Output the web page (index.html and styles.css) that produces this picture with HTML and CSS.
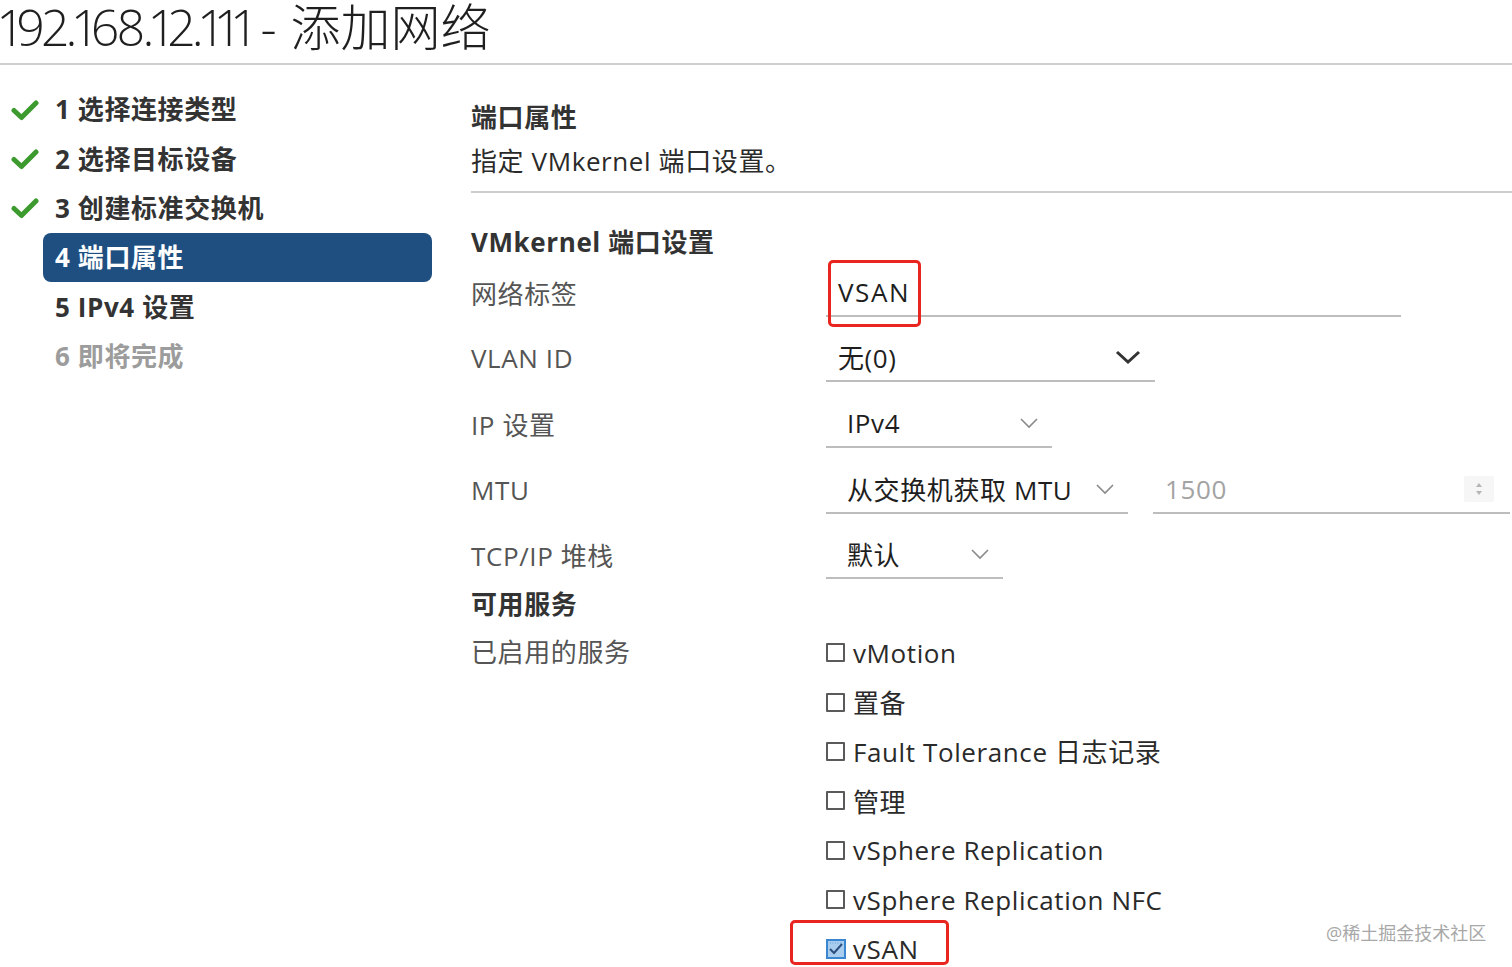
FILE: index.html
```html
<!DOCTYPE html>
<html lang="zh-CN">
<head>
  <meta charset="UTF-8">
  <meta name="viewport" content="width=device-width, initial-scale=1.0">
  <title>192.168.12.111 - 添加网络</title>
  <link rel="stylesheet" href="styles.css">
</head>
<body>
  <header class="dialog-header">
    <h1 class="dialog-title"><span class="host">192.168.12.111 -</span> 添加网络</h1>
  </header>

  <div class="wizard">
    <nav class="steps">
      <div class="step done">
        <span class="step-icon"><svg width="28" height="22" viewBox="0 0 28 22"><path d="M3 11.5 L10.5 18.5 L25 4" fill="none" stroke="#3d9a2e" stroke-width="5" stroke-linecap="round" stroke-linejoin="round"/></svg></span>
        <span class="step-label">1 选择连接类型</span>
      </div>
      <div class="step done">
        <span class="step-icon"><svg width="28" height="22" viewBox="0 0 28 22"><path d="M3 11.5 L10.5 18.5 L25 4" fill="none" stroke="#3d9a2e" stroke-width="5" stroke-linecap="round" stroke-linejoin="round"/></svg></span>
        <span class="step-label">2 选择目标设备</span>
      </div>
      <div class="step done">
        <span class="step-icon"><svg width="28" height="22" viewBox="0 0 28 22"><path d="M3 11.5 L10.5 18.5 L25 4" fill="none" stroke="#3d9a2e" stroke-width="5" stroke-linecap="round" stroke-linejoin="round"/></svg></span>
        <span class="step-label">3 创建标准交换机</span>
      </div>
      <div class="step active">
        <span class="step-icon"></span>
        <span class="step-label">4 端口属性</span>
      </div>
      <div class="step">
        <span class="step-icon"></span>
        <span class="step-label">5 IPv4 设置</span>
      </div>
      <div class="step disabled">
        <span class="step-icon"></span>
        <span class="step-label">6 即将完成</span>
      </div>
    </nav>

    <main class="page">
      <h2 class="page-title">端口属性</h2>
      <p class="page-desc">指定 VMkernel 端口设置。</p>

      <h3 class="section-title">VMkernel 端口设置</h3>
      <div class="form">
        <div class="form-row">
          <span class="form-label">网络标签</span>
          <div class="field field-label">
            <span class="field-value">VSAN</span>
            <span class="highlight highlight-input"></span>
          </div>
        </div>
        <div class="form-row">
          <span class="form-label">VLAN ID</span>
          <div class="field select select-vlan">
            <span class="field-value">无(0)</span>
            <svg class="chevron bold" width="26" height="16" viewBox="0 0 26 16"><path d="M2 3 L13 13 L24 3" fill="none" stroke="#333" stroke-width="3"/></svg>
          </div>
        </div>
        <div class="form-row">
          <span class="form-label">IP 设置</span>
          <div class="field select select-ip">
            <span class="field-value">IPv4</span>
            <svg class="chevron" width="20" height="12" viewBox="0 0 20 12"><path d="M2 2 L10 10 L18 2" fill="none" stroke="#8a8a8a" stroke-width="1.6"/></svg>
          </div>
        </div>
        <div class="form-row">
          <span class="form-label">MTU</span>
          <div class="field select select-mtu">
            <span class="field-value">从交换机获取 MTU</span>
            <svg class="chevron" width="20" height="12" viewBox="0 0 20 12"><path d="M2 2 L10 10 L18 2" fill="none" stroke="#8a8a8a" stroke-width="1.6"/></svg>
          </div>
          <div class="field field-number">
            <span class="field-value muted">1500</span>
            <span class="spinner">
              <svg width="10" height="18" viewBox="0 0 10 18"><path d="M2 7 L5 3 L8 7 Z M2 11 L5 15 L8 11 Z" fill="#b5b5b5"/></svg>
            </span>
          </div>
        </div>
        <div class="form-row">
          <span class="form-label">TCP/IP 堆栈</span>
          <div class="field select select-stack">
            <span class="field-value">默认</span>
            <svg class="chevron" width="20" height="12" viewBox="0 0 20 12"><path d="M2 2 L10 10 L18 2" fill="none" stroke="#8a8a8a" stroke-width="1.6"/></svg>
          </div>
        </div>
      </div>

      <h3 class="section-title services-title">可用服务</h3>
      <div class="services">
        <span class="form-label services-label">已启用的服务</span>
        <ul class="service-list">
          <li class="service"><span class="checkbox"></span>vMotion</li>
          <li class="service"><span class="checkbox"></span>置备</li>
          <li class="service"><span class="checkbox"></span>Fault Tolerance 日志记录</li>
          <li class="service"><span class="checkbox"></span>管理</li>
          <li class="service"><span class="checkbox"></span>vSphere Replication</li>
          <li class="service"><span class="checkbox"></span>vSphere Replication NFC</li>
          <li class="service">
            <svg class="checkbox-on" width="20" height="20" viewBox="0 0 20 20"><rect x="1" y="1" width="18" height="18" fill="#a9cdef" stroke="#3b86d0" stroke-width="2"/><path d="M4 10 L8 14 L16 5" fill="none" stroke="#2c4f80" stroke-width="2"/><path d="M4 4 H16" stroke="#6aa3dc" stroke-width="1" stroke-dasharray="1 1.5"/></svg>vSAN
            <span class="highlight highlight-check"></span>
          </li>
        </ul>
      </div>
    </main>
  </div>

  <div class="watermark">@稀土掘金技术社区</div>
</body>
</html>
```

FILE: styles.css
```css
body {
  font-family: 'Open Sans', 'Noto Sans CJK SC', sans-serif;
  margin: 0;
  width: 1512px;
  height: 967px;
  overflow: hidden;
  color: #2e2e2e;
  background-color: #fff;
  position: relative;
  letter-spacing: 0.6px;
}
.dialog-header {
  height: 63px;
  border-bottom: 2px solid #cfcfcf;
}
.dialog-title {
  margin: 0;
  padding-top: 1px;
  font-size: 50px;
  line-height: 52px;
  font-weight: 300;
  color: #1f1f1f;
  letter-spacing: 0;
  white-space: nowrap;
}
.host {
  font-variant-numeric: proportional-nums;
  letter-spacing: -3px;
  margin-right: 4px;
}
.wizard {
  display: flex;
}
.steps {
  width: 471px;
  flex-shrink: 0;
  padding-top: 20px;
}
.step {
  display: flex;
  align-items: center;
  height: 49.4px;
}
.step-icon {
  width: 43px;
  display: flex;
  justify-content: center;
  padding-left: 6px;
  box-sizing: border-box;
}
.step-label {
  width: 389px;
  height: 49px;
  line-height: 49px;
  padding-left: 12px;
  box-sizing: border-box;
  border-radius: 8px;
  font-size: 26px;
  font-weight: 700;
  color: #333;
}
.step.active .step-label {
  background-color: #1e4f80;
  color: #fff;
}
.step.disabled .step-label {
  color: #9c9c9c;
}
.page {
  flex: 1;
}
.page-title {
  margin: 30px 0 0;
  font-size: 26px;
  line-height: 44px;
  font-weight: 700;
  color: #333;
}
.page-desc {
  margin: 0;
  padding-bottom: 8px;
  font-size: 26px;
  line-height: 44px;
  color: #2a2a2a;
  border-bottom: 2px solid #cdcdcd;
}
.section-title {
  margin: 31px 0 0;
  font-size: 26px;
  line-height: 36px;
  font-weight: 700;
  color: #333;
}
.form-row {
  display: flex;
  align-items: center;
  height: 65.6px;
}
.form-label {
  width: 355px;
  flex-shrink: 0;
  font-size: 26px;
  color: #555;
}
.field {
  position: relative;
  display: flex;
  align-items: center;
  height: 46px;
  border-bottom: 2px solid #bdbdbd;
  font-size: 26px;
  color: #1e1e1e;
  box-sizing: content-box;
}
.field-value {
  flex: 1;
}
.field-value.muted {
  color: #a3a3a3;
}
.field-label {
  width: 563px;
  padding-left: 12px;
}
.field-label .field-value {
  letter-spacing: 1.6px;
}
.select {
  padding-left: 21px;
}
.select-vlan {
  width: 303px;
  padding-left: 12px;
  padding-right: 14px;
}
.select-ip {
  width: 192px;
  padding-right: 13px;
}
.select-mtu {
  width: 268px;
  padding-right: 13px;
}
.select-stack {
  width: 143px;
  padding-right: 13px;
}
.field-number {
  margin-left: 25px;
  width: 345px;
  padding-left: 12px;
}
.spinner {
  width: 30px;
  height: 26px;
  margin-right: 16px;
  background-color: #f6f6f6;
  border-radius: 2px;
  display: flex;
  align-items: center;
  justify-content: center;
}
.highlight {
  position: absolute;
  border: 3px solid #e8251f;
  border-radius: 5px;
  box-sizing: border-box;
}
.highlight-input {
  left: 2px;
  top: -9px;
  width: 93px;
  height: 67px;
}
.services-title {
  margin: 0 0 8px;
  line-height: 32px;
}
.services {
  display: flex;
  align-items: flex-start;
}
.services-label {
  line-height: 49.4px;
}
.service-list {
  list-style: none;
  margin: 0;
  padding: 0;
}
.service {
  position: relative;
  display: flex;
  align-items: center;
  height: 49.4px;
  font-size: 26px;
  color: #2a2a2a;
}
.checkbox {
  width: 15px;
  height: 15px;
  border: 2px solid #5a5a5a;
  border-radius: 1px;
  margin-right: 8px;
}
.checkbox-on {
  margin-right: 7px;
}
.highlight-check {
  left: -36px;
  top: -4px;
  width: 159px;
  height: 45px;
}
.watermark {
  position: absolute;
  left: 1326px;
  top: 919px;
  font-size: 18px;
  letter-spacing: 0;
  color: #a8a8a8;
}
```
